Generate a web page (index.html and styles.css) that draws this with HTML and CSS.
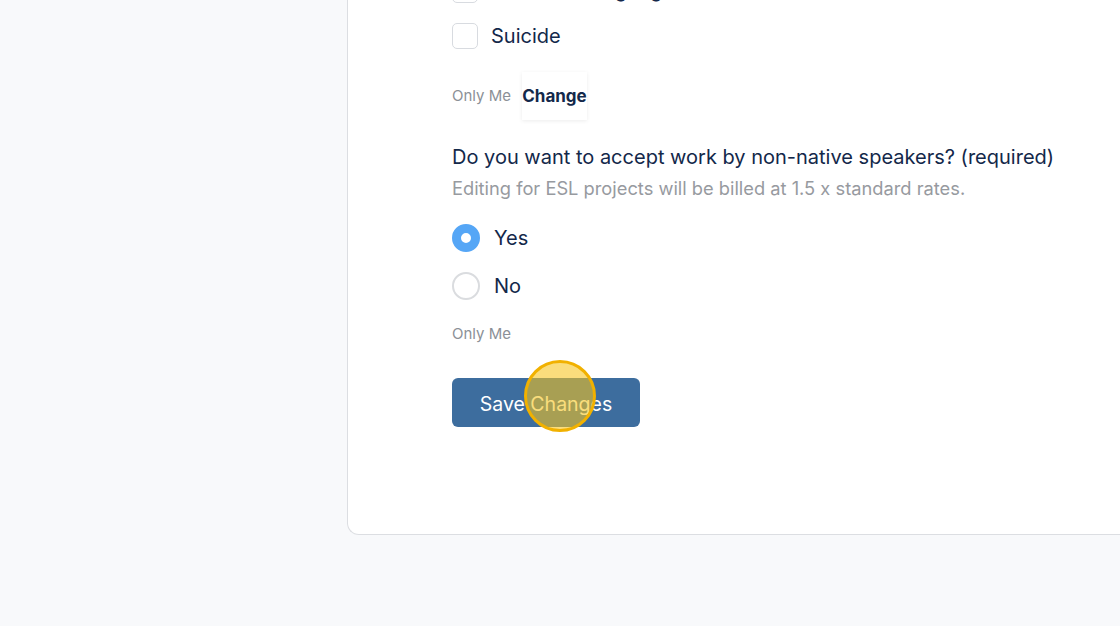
FILE: index.html
```html
<!DOCTYPE html>
<html lang="en">
<head>
<meta charset="utf-8">
<title>Preferences</title>
<link rel="stylesheet" href="styles.css">
</head>
<body>
<div class="page">
  <div class="card">
    <div class="options">
      <label class="check-row"><span class="box"></span><span class="check-label">Offensive language</span></label>
      <label class="check-row"><span class="box"></span><span class="check-label">Suicide</span></label>
    </div>
    <div class="meta">
      <span class="privacy">Only Me</span>
      <button class="change">Change</button>
    </div>
    <h3 class="question">Do you want to accept work by non-native speakers? (required)</h3>
    <p class="hint">Editing for ESL projects will be billed at 1.5 x standard rates.</p>
    <div class="radios">
      <label class="radio-row"><span class="radio on"></span><span class="radio-label">Yes</span></label>
      <label class="radio-row"><span class="radio"></span><span class="radio-label">No</span></label>
    </div>
    <div class="privacy privacy-2">Only Me</div>
    <div class="save-wrap">
      <button class="save">Save Changes</button>
      <span class="click-marker"></span>
    </div>
  </div>
</div>
</body>
</html>
```

FILE: styles.css
```css
* { box-sizing: border-box; }
html, body { margin: 0; padding: 0; }
body {
  background: #f8f9fb;
  font-family: Inter, "Liberation Sans", Arial, sans-serif;
  color: #13284a;
  width: 1120px;
  height: 626px;
  overflow: hidden;
}
.page {
  padding-left: 347px;
}
.card {
  background: #ffffff;
  border: 1px solid #dcdee2;
  border-top: none;
  border-right: none;
  border-radius: 0 0 0 12px;
  padding: 0 0 107px 104px;
  width: 800px;
}
.options {
  margin-top: -23px;
}
.check-row {
  display: flex;
  align-items: center;
  gap: 13px;
  height: 26px;
  margin-bottom: 20px;
}
.box {
  width: 26px;
  height: 26px;
  border: 1.5px solid #d8dbe0;
  border-radius: 5px;
  background: #fff;
  flex: none;
}
.check-label {
  font-size: 20px;
  color: #13284a;
}
.meta {
  display: flex;
  align-items: center;
  gap: 11px;
  height: 48px;
  margin-top: 23px;
}
.privacy {
  font-size: 15px;
  color: #8b9097;
  line-height: 20px;
}
.change {
  width: 65px;
  height: 48px;
  padding: 0;
  border: none;
  background: #fff;
  box-shadow: 0 1px 4px rgba(0, 0, 0, 0.08);
  font-family: inherit;
  font-weight: 700;
  font-size: 17px;
  color: #13284a;
  text-align: center;
}
.question {
  margin: 25px 0 0;
  font-size: 20px;
  line-height: 24px;
  font-weight: normal;
  color: #13284a;
}
.hint {
  margin: 8px 0 0;
  font-size: 18.3px;
  line-height: 22px;
  color: #979a9f;
}
.radios {
  margin-top: 25px;
  display: flex;
  flex-direction: column;
  gap: 20px;
}
.radio-row {
  display: flex;
  align-items: center;
  gap: 14px;
  height: 28px;
}
.radio {
  width: 28px;
  height: 28px;
  border-radius: 50%;
  border: 2px solid #dadcdf;
  background: #fff;
  flex: none;
}
.radio.on {
  border: 9px solid #55a6f6;
  background: #fff;
}
.radio-label {
  font-size: 20px;
  color: #13284a;
}
.privacy-2 {
  margin-top: 24px;
}
.save-wrap {
  position: relative;
  margin-top: 34px;
  width: 188px;
}
.save {
  width: 188px;
  height: 49px;
  padding: 3px 0 0;
  border: none;
  border-radius: 6px;
  background: #3d6d9e;
  color: #fff;
  font-family: inherit;
  font-size: 19.5px;
}
.click-marker {
  position: absolute;
  left: 72px;
  top: -18px;
  width: 72px;
  height: 72px;
  border-radius: 50%;
  border: 3px solid #f1b100;
  background: rgba(247, 196, 30, 0.58);
  pointer-events: none;
}
```
